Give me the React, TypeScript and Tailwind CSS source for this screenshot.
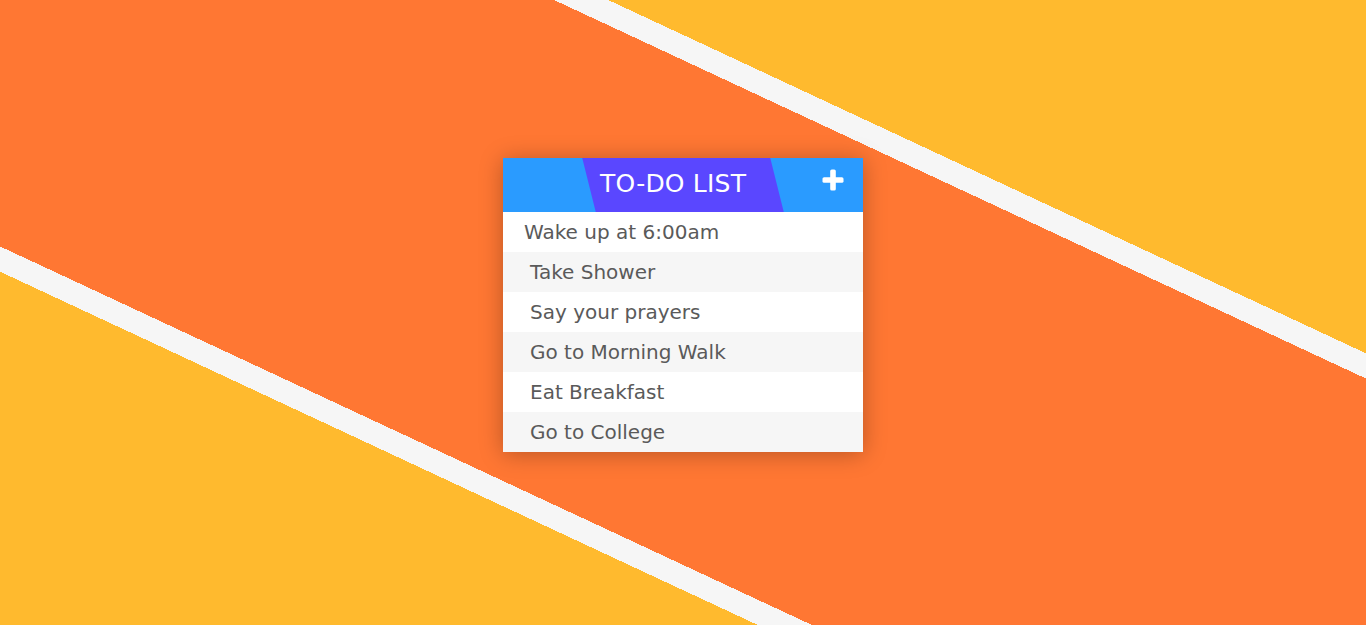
const tasks = [
  "Wake up at 6:00am",
  "Take Shower",
  "Say your prayers",
  "Go to Morning Walk",
  "Eat Breakfast",
  "Go to College",
];

function PlusIcon() {
  return (
    <svg width="22" height="22" viewBox="0 0 22 22" aria-hidden="true">
      <rect x="8.2" y="0.5" width="5.6" height="21" rx="1.6" fill="#fff" />
      <rect x="0.5" y="8.2" width="21" height="5.6" rx="1.6" fill="#fff" />
    </svg>
  );
}

export default function App() {
  return (
    <div className="flex h-[625px] w-full justify-center bg-[linear-gradient(25deg,#ffba2e_28%,#f6f6f6_28%,#f6f6f6_30%,#ff7733_30%,#ff7733_70%,#f6f6f6_70%,#f6f6f6_72%,#ffba2e_72%)] pt-[158px] font-['DejaVu_Sans',Verdana,sans-serif]">
      <div className="h-max w-[360px] bg-white shadow-[0_2px_22px_rgba(0,0,0,0.28)]">
        <div className="relative flex h-[54px] items-center justify-center bg-[#2a9bff]">
          <div className="flex h-full w-[188px] skew-x-[14deg] items-center bg-[#5a47ff]">
            <span className="-skew-x-[14deg] pb-[4px] pl-[11px] text-[25px] leading-none tracking-[0.2px] text-white">
              TO-DO LIST
            </span>
          </div>
          <button
            type="button"
            aria-label="Add task"
            className="absolute top-[11px] right-[19px] flex items-center justify-center"
          >
            <PlusIcon />
          </button>
        </div>
        <ul>
          {tasks.map((task, i) => (
            <li
              key={task}
              className={`flex h-[40px] items-center text-[20px] text-[#5a5a5a] ${
                i % 2 === 1 ? "bg-[#f6f6f6]" : "bg-white"
              } ${i === 0 ? "pl-[21px]" : "pl-[27px]"}`}
            >
              {task}
            </li>
          ))}
        </ul>
      </div>
    </div>
  );
}
